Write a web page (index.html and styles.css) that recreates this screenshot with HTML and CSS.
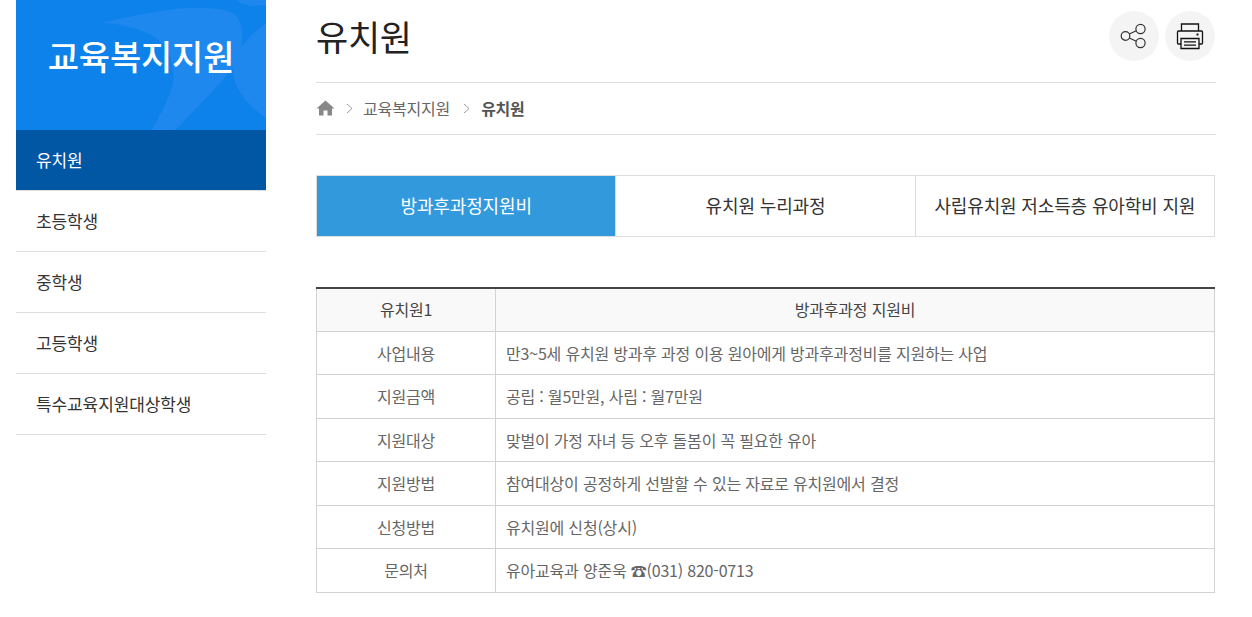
FILE: index.html

```html
<!DOCTYPE html>
<html lang="ko">
<head>
    <meta charset="UTF-8">
    <meta name="viewport" content="width=device-width, initial-scale=1.0">
    <title>유치원</title>
    <link rel="stylesheet" href="styles.css">
</head>
<body>
    <div class="wrap">
        <aside class="side">
            <div class="side-title">
                <svg class="side-bg" width="250" height="130" viewBox="0 0 250 130">
                    <path d="M86 23 C120 15 150 9 171 8 C195 7 212 9 219 15 C227 22 229 40 222 60 C205 85 178 110 159 130 L136 130 C150 105 160 85 157 70 C155 55 150 45 140 38 C125 28 105 24 86 23Z" fill="#1e88ee"/>
                    <path d="M250 23 C228 40 217 55 217 70 C217 90 235 108 250 118Z" fill="#1e88ee"/>
                    <path d="M221 0 C226 5 235 7 250 5 L250 0Z" fill="#1e88ee"/>
                </svg>
                <h2>교육복지지원</h2>
            </div>
            <ul class="side-menu">
                <li class="on">유치원</li>
                <li>초등학생</li>
                <li>중학생</li>
                <li>고등학생</li>
                <li>특수교육지원대상학생</li>
            </ul>
        </aside>

        <main class="content">
            <div class="page-head">
                <h1>유치원</h1>
                <div class="tools">
                    <span class="tool">
                        <svg width="28" height="28" viewBox="0 0 28 28" fill="none" stroke="#333" stroke-width="1.2">
                            <circle cx="5.500" cy="14" r="4.300"/>
                            <circle cx="20.500" cy="7" r="4.600"/>
                            <circle cx="20.500" cy="21" r="4.600"/>
                            <path d="M9.300 12 L16.300 8.800 M9.300 16 L16.300 19.200"/>
                        </svg>
                    </span>
                    <span class="tool">
                        <svg width="28" height="28" viewBox="0 0 28 28" fill="none" stroke="#111" stroke-width="1.300">
                            <path d="M5.500 9 V2 H22.500 V9"/>
                            <path d="M5 22 H2.500 Q1.500 22 1.500 21 V10 Q1.500 9 2.500 9 H25.500 Q26.500 9 26.500 10 V21 Q26.500 22 25.500 22 H23"/>
                            <path d="M5 16.500 H23 V26.500 H5Z"/>
                            <path d="M8 19.800 H20 M8 23.200 H20"/>
                            <rect x="20.500" y="11.500" width="2" height="2" fill="#111" stroke="none"/>
                        </svg>
                    </span>
                </div>
            </div>

            <div class="crumbs">
                <svg class="home" width="19" height="16" viewBox="0 0 19 16">
                    <path d="M9.500 0.500 L0.500 8.500 H3 V15.500 H7.500 V10.500 H11.500 V15.500 H16 V8.500 H18.500Z" fill="#888"/>
                </svg>
                <svg class="arrow" width="7" height="11" viewBox="0 0 7 11"><path d="M1 1 L6 5.500 L1 10" fill="none" stroke="#999"/></svg>
                <span>교육복지지원</span>
                <svg class="arrow" width="7" height="11" viewBox="0 0 7 11"><path d="M1 1 L6 5.500 L1 10" fill="none" stroke="#999"/></svg>
                <strong>유치원</strong>
            </div>

            <div class="tabs">
                <a class="tab on">방과후과정지원비</a>
                <a class="tab">유치원 누리과정</a>
                <a class="tab">사립유치원 저소득층 유아학비 지원</a>
            </div>

            <table class="info">
                <thead>
                    <tr>
                        <th class="col-name">유치원1</th>
                        <th>방과후과정 지원비</th>
                    </tr>
                </thead>
                <tbody>
                    <tr><td class="name">사업내용</td><td>만3~5세 유치원 방과후 과정 이용 원아에게 방과후과정비를 지원하는 사업</td></tr>
                    <tr><td class="name">지원금액</td><td>공립 : 월5만원, 사립 : 월7만원</td></tr>
                    <tr><td class="name">지원대상</td><td>맞벌이 가정 자녀 등 오후 돌봄이 꼭 필요한 유아</td></tr>
                    <tr><td class="name">지원방법</td><td>참여대상이 공정하게 선발할 수 있는 자료로 유치원에서 결정</td></tr>
                    <tr><td class="name">신청방법</td><td>유치원에 신청(상시)</td></tr>
                    <tr><td class="name">문의처</td><td>유아교육과 양준욱 ☎(031) 820-0713</td></tr>
                </tbody>
            </table>
        </main>
    </div>
</body>
</html>
```

FILE: styles.css

```css
* {
    box-sizing: border-box;
}
html, body {
    margin: 0;
    padding: 0;
    background: #fff;
    overflow: hidden;
}
body {
    font-family: "Noto Sans CJK KR", "Noto Sans", sans-serif;
    color: #333;
}
.wrap {
    display: flex;
    gap: 50px;
    padding-left: 16px;
    width: 1252px;
    height: 617px;
}

/* left menu */
.side {
    width: 250px;
    flex: none;
}
.side-title {
    position: relative;
    height: 130px;
    background: #0d82ea;
    display: flex;
    align-items: center;
    justify-content: center;
    overflow: hidden;
}
.side-bg {
    position: absolute;
    left: 0;
    top: 0;
}
.side-title h2 {
    position: relative;
    margin: 0 0 20px;
    font-size: 34px;
    font-weight: 500;
    letter-spacing: -0.2px;
    color: #fff;
}
.side-menu {
    list-style: none;
    margin: 0;
    padding: 0;
}
.side-menu li {
    height: 61px;
    line-height: 60px;
    padding-left: 20px;
    font-size: 17px;
    letter-spacing: -0.1px;
    color: #333;
    border-bottom: 1px solid #ddd;
}
.side-menu li.on {
    background: #0257a5;
    color: #fff;
}

/* title */
.content {
    width: 900px;
    flex: none;
}
.page-head {
    display: flex;
    justify-content: space-between;
    height: 83px;
    border-bottom: 1px solid #ddd;
}
.page-head h1 {
    margin: 11px 0 0;
    font-size: 35px;
    line-height: 50px;
    font-weight: 400;
    letter-spacing: -0.3px;
    color: #222;
}
.tools {
    display: flex;
    gap: 6px;
    padding-top: 11px;
    margin-right: 1px;
}
.tool {
    width: 50px;
    height: 50px;
    border-radius: 50%;
    background: #f4f4f4;
    display: flex;
    align-items: center;
    justify-content: center;
}

/* breadcrumb */
.crumbs {
    display: flex;
    align-items: center;
    height: 52px;
    padding-bottom: 1px;
    border-bottom: 1px solid #ddd;
    font-size: 16px;
    letter-spacing: -0.2px;
    color: #666;
}
.crumbs .home {
    margin-right: 11px;
}
.crumbs .arrow {
    margin-right: 10px;
}
.crumbs span {
    margin-right: 13px;
}
.crumbs strong {
    margin-left: 1px;
    font-weight: 700;
    letter-spacing: -0.3px;
    color: #555;
}

/* tabs */
.tabs {
    display: flex;
    width: 899px;
    height: 62px;
    margin-top: 40px;
    border: 1px solid #ddd;
}
.tab {
    flex: 1;
    display: flex;
    align-items: center;
    justify-content: center;
    padding-bottom: 3px;
    font-size: 18px;
    letter-spacing: -0.15px;
    color: #333;
    border-left: 1px solid #ddd;
}
.tab:first-child {
    border-left: 0;
}
.tab.on {
    background: #3399dd;
    color: #fff;
}

/* table */
.info {
    width: 899px;
    margin-top: 50px;
    border-collapse: collapse;
    border-top: 2px solid #444;
    table-layout: fixed;
    font-size: 16px;
    letter-spacing: -0.2px;
}
.info th, .info td {
    height: 43.480px;
    padding: 0 10px 1px;
    border: 1px solid #d2d2d2;
    font-weight: 400;
    color: #666;
}
.info th {
    background: #f9f9f9;
    color: #444;
    text-align: center;
}
.info thead tr:first-child th {
    border-top: 0;
}
.col-name {
    width: 179px;
}
.info td.name {
    text-align: center;
}
```
